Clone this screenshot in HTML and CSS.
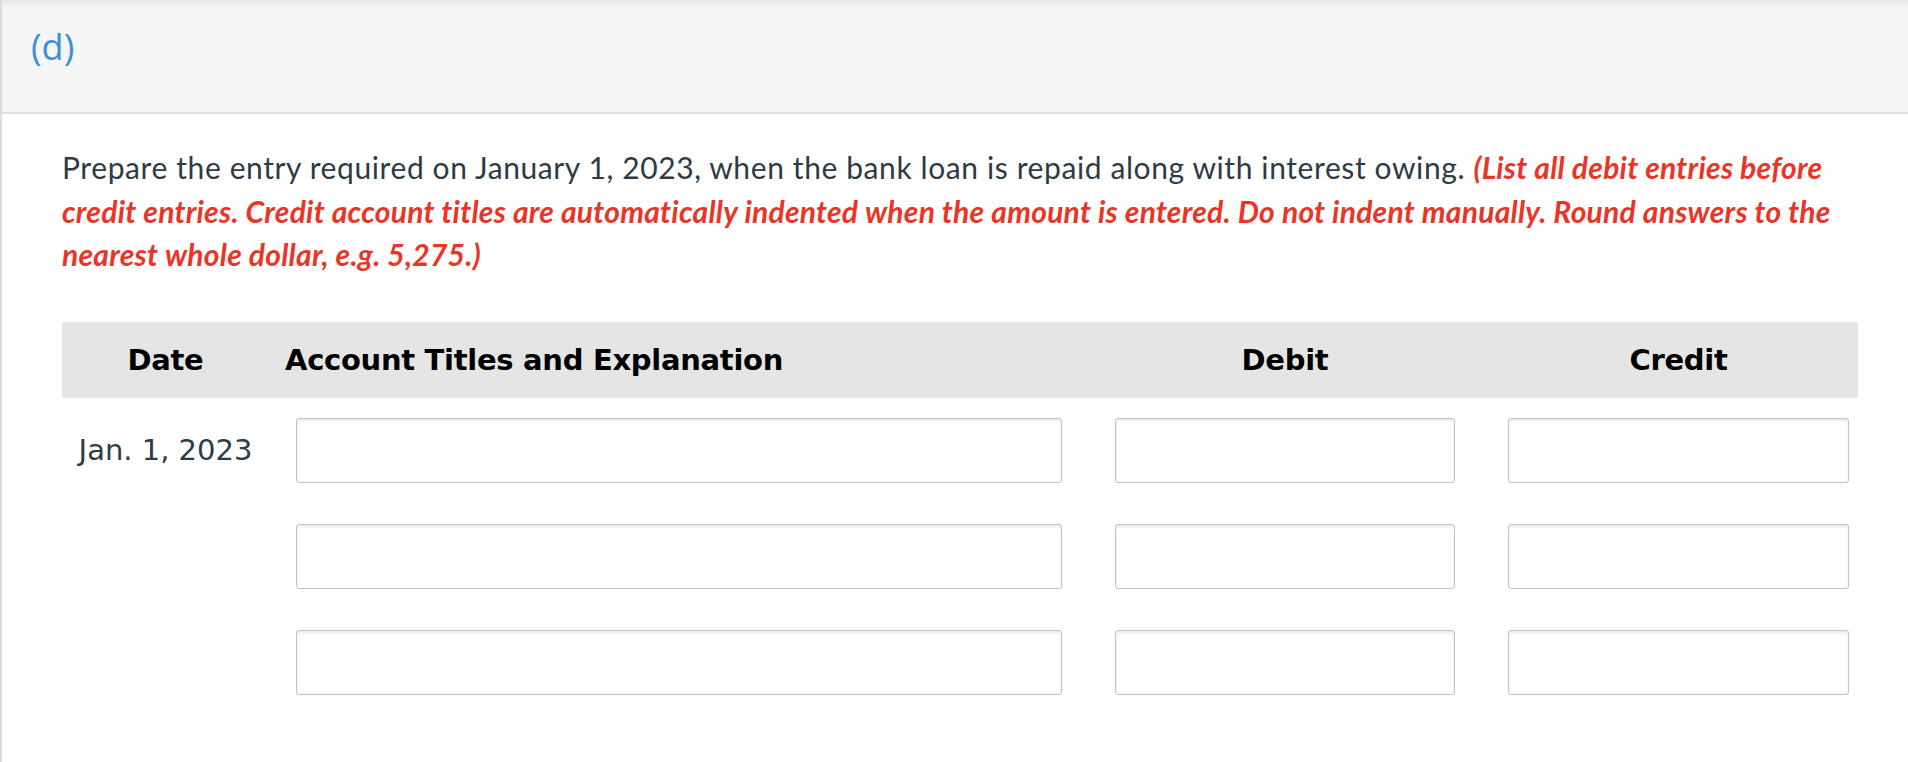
FILE: index.html
```html
<!DOCTYPE html>
<html lang="en">
<head>
<meta charset="utf-8">
<title>Question (d)</title>
<link rel="stylesheet" href="styles.css">
</head>
<body>
<div class="panel">
  <div class="panel-head">
    <span class="part">(d)</span>
  </div>
  <div class="panel-body">
    <p class="prompt">Prepare the entry required on January 1, 2023, when the bank loan is repaid along with interest owing. <em class="note">(List all debit entries before credit entries. Credit account titles are automatically indented when the amount is entered. Do not indent manually. Round answers to the nearest whole dollar, e.g. 5,275.)</em></p>

    <div class="journal">
      <div class="jrow jhead">
        <div class="c-date">Date</div>
        <div class="c-acct">Account Titles and Explanation</div>
        <div class="c-num">Debit</div>
        <div class="c-num">Credit</div>
      </div>
      <div class="jrow jline">
        <div class="c-date">Jan. 1, 2023</div>
        <div class="c-acct"><input class="field" type="text"></div>
        <div class="c-num"><input class="field" type="text"></div>
        <div class="c-num"><input class="field" type="text"></div>
      </div>
      <div class="jrow jline">
        <div class="c-date"></div>
        <div class="c-acct"><input class="field" type="text"></div>
        <div class="c-num"><input class="field" type="text"></div>
        <div class="c-num"><input class="field" type="text"></div>
      </div>
      <div class="jrow jline">
        <div class="c-date"></div>
        <div class="c-acct"><input class="field" type="text"></div>
        <div class="c-num"><input class="field" type="text"></div>
        <div class="c-num"><input class="field" type="text"></div>
      </div>
    </div>
  </div>
</div>
</body>
</html>
```

FILE: styles.css
```css
html, body {
  margin: 0;
  padding: 0;
  background: #ffffff;
}

.panel {
  border-left: 2px solid #dcdcdc;
  min-height: 762px;
  box-sizing: border-box;
}

.panel-head {
  height: 112px;
  border-bottom: 2px solid #dedede;
  background: linear-gradient(to bottom, #e6e6e6 0px, #f1f1f1 5px, #f5f5f5 10px, #f5f5f5 100%);
  display: flex;
  align-items: flex-start;
  padding-left: 29px;
}

.part {
  font-family: "Open Sans", "Liberation Sans", sans-serif;
  font-size: 36px;
  line-height: 50px;
  color: #3a8edc;
  margin-top: 22px;
}

.panel-body {
  padding: 32px 48px 0 60px;
}

.prompt {
  margin: 0;
  font-family: Lato, "Liberation Sans", sans-serif;
  font-size: 30px;
  letter-spacing: 0.6px;
  line-height: 43.5px;
  color: #2d3b45;
  max-width: 1796px;
}

.note {
  color: #ea3425;
  font-weight: bold;
  font-style: italic;
  letter-spacing: 0.25px;
}

.journal {
  margin-top: 45px;
  width: 1796px;
}

.jrow {
  display: grid;
  grid-template-columns: 207px 793px 393px 394px;
  padding-right: 9px;
  align-items: center;
}

.jhead {
  height: 76px;
  background: #e5e5e5;
  font-family: "DejaVu Sans", Verdana, sans-serif;
  font-weight: bold;
  font-size: 29px;
  letter-spacing: -0.3px;
  color: #000000;
}

.c-date {
  text-align: center;
  white-space: nowrap;
}

.jline .c-date {
  font-family: "DejaVu Sans", Verdana, sans-serif;
  font-size: 29px;
  color: #2d3b45;
}

.jhead .c-acct {
  padding-left: 16px;
}

.jline .c-acct {
  padding-left: 27px;
}

.c-num {
  padding-left: 53px;
  text-align: center;
}

.jline {
  margin-top: 20px;
}

.jline + .jline {
  margin-top: 41px;
}

.field {
  display: block;
  height: 65px;
  box-sizing: border-box;
  width: 100%;
  margin: 0;
  border: 1px solid #c2c2c2;
  border-radius: 3px;
  background: #ffffff;
  box-shadow: inset 0 2px 3px rgba(0, 0, 0, 0.09);
  outline: none;
  font-size: 20px;
}
```
